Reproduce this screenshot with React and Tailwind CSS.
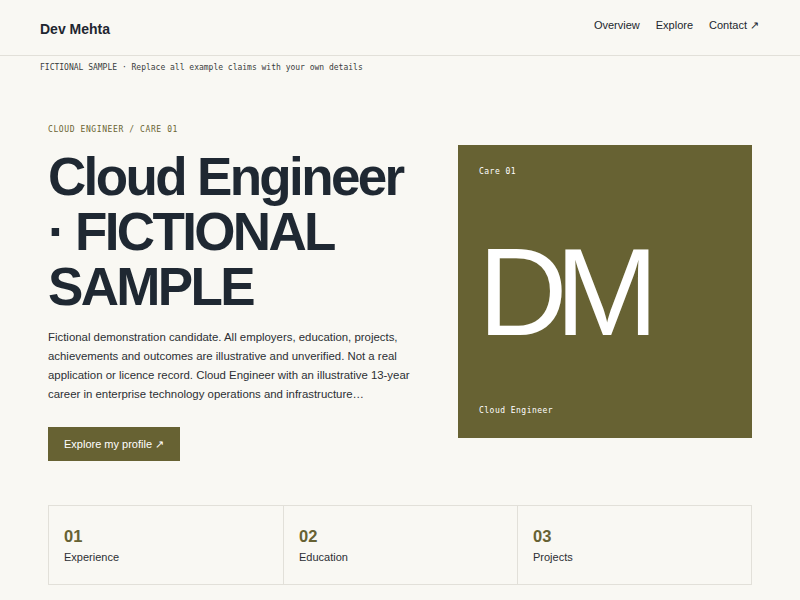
const SANS = { fontFamily: "'Liberation Sans', Arial, sans-serif" };
const MONO = { fontFamily: "'DejaVu Sans Mono', 'Liberation Mono', monospace" };

const STATS = [
  { num: '01', label: 'Experience' },
  { num: '02', label: 'Education' },
  { num: '03', label: 'Projects' },
];

function Header() {
  return (
    <header className="h-[56px] px-10 flex items-center justify-between border-b border-[#e2e0d9]">
      <div className="text-[14px] font-bold text-[#1f2630] pt-[3px]">Dev Mehta</div>
      <nav className="flex items-center gap-[16px] text-[11px] text-[#22272e] pb-[4px] pr-[1px]">
        <a>Overview</a>
        <a>Explore</a>
        <a>Contact ↗</a>
      </nav>
    </header>
  );
}

export default function App() {
  return (
    <div className="min-h-[600px] bg-[#f9f8f3] text-[#1f2832]" style={SANS}>
      <Header />
      <div className="px-10 pt-[7px] text-[8px] leading-[10px] text-[#3a3d40]" style={MONO}>
        FICTIONAL SAMPLE · Replace all example claims with your own details
      </div>

      <main className="px-12">
        {/* Hero */}
        <section className="mt-[49px] flex items-center gap-[38px]">
          <div className="flex-1 pt-[2px]">
            <p className="text-[8px] leading-[12px] tracking-[0.075em] text-[#6b6533]" style={MONO}>
              CLOUD ENGINEER / CARE 01
            </p>
            <h1 className="mt-[13px] text-[53px] leading-[55px] font-bold tracking-[-0.05em] text-[#1f2832]">
              Cloud Engineer
              <br />· FICTIONAL
              <br />SAMPLE
            </h1>
            <p className="mt-[14px] text-[11.4px] leading-[19px] text-[#2c2f33] w-[372px]">
              Fictional demonstration candidate. All employers, education, projects, achievements
              and outcomes are illustrative and unverified. Not a real application or licence
              record. Cloud Engineer with an illustrative 13-year career in enterprise technology
              operations and infrastructure…
            </p>
            <button className="mt-[23px] h-[34px] px-[16px] bg-[#676233] text-white text-[11px]">
              Explore my profile ↗
            </button>
          </div>

          <div className="w-[294px] h-[293px] bg-[#676233] p-[21px] flex flex-col justify-between text-white">
            <div className="text-[8px] leading-[12px] tracking-[0.06em]" style={MONO}>Care 01</div>
            <div className="text-[124px] leading-none tracking-[-0.1em] -ml-[1px]">DM</div>
            <div className="text-[8px] leading-[12px] tracking-[0.06em]" style={MONO}>Cloud Engineer</div>
          </div>
        </section>

        {/* Stats */}
        <section className="mt-[44px] grid grid-cols-3 border border-[#e2e0d9]">
          {STATS.map((s, i) => (
            <div
              key={s.num}
              className={`h-[78px] px-[15px] pt-[20px] ${i > 0 ? 'border-l border-[#e2e0d9]' : ''}`}
            >
              <div className="text-[16.5px] leading-[20px] font-bold text-[#676233]">{s.num}</div>
              <div className="mt-[4px] text-[11px] leading-[14px] text-[#2c2f33]">{s.label}</div>
            </div>
          ))}
        </section>
      </main>
    </div>
  );
}
